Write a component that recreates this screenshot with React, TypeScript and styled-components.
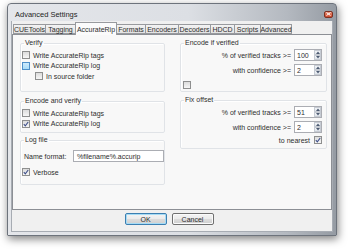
import React from "react";
import styled, { createGlobalStyle } from "styled-components";

const tabs = [
  { label: "CUETools", width: 33 },
  { label: "Tagging", width: 31 },
  { label: "AccurateRip", width: 42, active: true },
  { label: "Formats", width: 30 },
  { label: "Encoders", width: 34 },
  { label: "Decoders", width: 33 },
  { label: "HDCD", width: 25 },
  { label: "Scripts", width: 27 },
  { label: "Advanced", width: 32 },
];

const Check: React.FC<{ checked?: boolean; hot?: boolean }> = ({ checked, hot }) => (
  <CheckBox $hot={hot}>
    {checked && (
      <svg width="6" height="6" viewBox="0 0 6 6">
        <path d="M0.8 3.2 L2.3 4.8 L5.2 1" fill="none" stroke="#3d4f8a" strokeWidth="1.1" />
      </svg>
    )}
  </CheckBox>
);

const Spin: React.FC<{ value: string }> = ({ value }) => (
  <SpinBox>
    <SpinText>{value}</SpinText>
    <SpinArrows>
      <SpinButton>
        <svg width="4" height="3" viewBox="0 0 4 3">
          <path d="M0 3 L2 0.5 L4 3 Z" fill="#4d5b72" />
        </svg>
      </SpinButton>
      <SpinButton>
        <svg width="4" height="3" viewBox="0 0 4 3">
          <path d="M0 0 L2 2.5 L4 0 Z" fill="#4d5b72" />
        </svg>
      </SpinButton>
    </SpinArrows>
  </SpinBox>
);

export default function App() {
  return (
    <Page>
      <GlobalStyle />
      <Window>
        <TitleBar>
          <Title>Advanced Settings</Title>
          <CloseButton>
            <svg width="5" height="4" viewBox="0 0 5 4">
              <path d="M0.5 0.5 L4.5 3.5 M4.5 0.5 L0.5 3.5" stroke="#fff" strokeWidth="1" />
            </svg>
          </CloseButton>
        </TitleBar>
        <Client>
          <TabStrip>
            {tabs.map((t) => (
              <Tab key={t.label} $active={t.active} style={{ width: t.width }}>
                {t.label}
              </Tab>
            ))}
          </TabStrip>
          <Panel>
            <Column>
              <Group $height={53}>
                <Legend>Verify</Legend>
                <Rows>
                  <CheckRow>
                    <Check />
                    Write AccurateRip tags
                  </CheckRow>
                  <CheckRow>
                    <Check hot />
                    Write AccurateRip log
                  </CheckRow>
                  <CheckRow $indent>
                    <Check />
                    In source folder
                  </CheckRow>
                </Rows>
              </Group>
              <Group $height={36} $gap={5}>
                <Legend>Encode and verify</Legend>
                <Rows>
                  <CheckRow>
                    <Check />
                    Write AccurateRip tags
                  </CheckRow>
                  <CheckRow>
                    <Check checked />
                    Write AccurateRip log
                  </CheckRow>
                </Rows>
              </Group>
              <Group $height={49} $gap={3}>
                <Legend>Log file</Legend>
                <FormatRow>
                  <FormatLabel>Name format:</FormatLabel>
                  <TextInput>%filename%.accurip</TextInput>
                </FormatRow>
                <VerboseRow>
                  <Check checked />
                  Verbose
                </VerboseRow>
              </Group>
            </Column>
            <Column>
              <Group $height={53}>
                <Legend>Encode if verified</Legend>
                <SpinRows>
                  <SpinRow>
                    % of verified tracks &gt;=
                    <Spin value="100" />
                  </SpinRow>
                  <SpinRow>
                    with confidence &gt;=
                    <Spin value="2" />
                  </SpinRow>
                  <LoneCheck>
                    <Check />
                  </LoneCheck>
                </SpinRows>
              </Group>
              <Group $height={53} $gap={4}>
                <Legend>Fix offset</Legend>
                <SpinRows>
                  <SpinRow>
                    % of verified tracks &gt;=
                    <Spin value="51" />
                  </SpinRow>
                  <SpinRow>
                    with confidence &gt;=
                    <Spin value="2" />
                  </SpinRow>
                  <NearestRow>
                    to nearest
                    <Check checked />
                  </NearestRow>
                </SpinRows>
              </Group>
            </Column>
          </Panel>
          <Footer>
            <Button $default>OK</Button>
            <Button>Cancel</Button>
          </Footer>
        </Client>
      </Window>
    </Page>
  );
}

const GlobalStyle = createGlobalStyle`
  html, body {
    margin: 0;
    padding: 0;
    background: #ffffff;
  }
  body {
    font-family: "Liberation Sans", Tahoma, sans-serif;
    font-size: 7px;
    color: #2e2e2e;
  }
`;

const Page = styled.div`
  width: 350px;
  height: 250px;
  box-sizing: border-box;
  padding: 3px 0 0 7px;
`;

const Window = styled.div`
  width: 330px;
  height: 233px;
  box-sizing: border-box;
  display: flex;
  flex-direction: column;
  padding: 0 3px 3px 3px;
  border: 1px solid #6d737c;
  border-radius: 4px 4px 1px 1px;
  background: linear-gradient(to right, #e4e6ea 0%, #dcdfe4 55%, #b4b9c0 85%, #959ba3 100%);
  box-shadow: 1px 3px 9px rgba(0, 0, 0, 0.5);
`;

const TitleBar = styled.div`
  height: 17px;
  box-sizing: border-box;
  display: flex;
  align-items: center;
  justify-content: space-between;
  padding: 3px 0 0 4px;
`;

const Title = styled.span`
  font-size: 7.5px;
  color: #1e1e1e;
`;

const CloseButton = styled.div`
  width: 9px;
  height: 7px;
  box-sizing: border-box;
  display: flex;
  align-items: center;
  justify-content: center;
  border: 1px solid #7c3022;
  border-radius: 2px;
  background: linear-gradient(#ec8d72, #cc4a2e);
`;

const Client = styled.div`
  flex: 1;
  display: flex;
  flex-direction: column;
  background: #f0f0f0;
  border: 1px solid #a7acb3;
  border-top: none;
`;

const TabStrip = styled.div`
  height: 13px;
  display: flex;
  align-items: flex-end;
  padding-left: 1px;
`;

const Tab = styled.div<{ $active?: boolean }>`
  box-sizing: border-box;
  height: ${(p) => (p.$active ? 13 : 10)}px;
  margin-right: -1px;
  margin-bottom: ${(p) => (p.$active ? -1 : 0)}px;
  display: flex;
  align-items: center;
  justify-content: center;
  border: 1px solid #989a9e;
  border-bottom: ${(p) => (p.$active ? "none" : "1px solid #989a9e")};
  background: ${(p) => (p.$active ? "#fbfbfb" : "linear-gradient(#f3f3f3, #e2e2e2)")};
  position: relative;
  z-index: ${(p) => (p.$active ? 2 : 1)};
  white-space: nowrap;
`;

const Panel = styled.div`
  height: 176px;
  box-sizing: border-box;
  display: grid;
  grid-template-columns: 145px 147px;
  column-gap: 15px;
  align-content: start;
  padding: 4px 0 0 7px;
  border: 1px solid #8c8f95;
  background: #f8f8f8;
`;

const Column = styled.div`
  display: flex;
  flex-direction: column;
`;

const Group = styled.fieldset<{ $height: number; $gap?: number }>`
  box-sizing: border-box;
  height: ${(p) => p.$height}px;
  margin: ${(p) => p.$gap ?? 0}px 0 0 0;
  padding: 0 0 0 1px;
  min-width: 0;
  border: 1px solid #e0e3e7;
  border-radius: 2px;
  box-shadow: inset 1px 1px 0 #ffffff;
`;

const Legend = styled.legend`
  padding: 0 1px;
  margin-left: 2px;
  line-height: 8px;
  font-size: 7px;
`;

const Rows = styled.div`
  display: flex;
  flex-direction: column;
  padding-top: 3px;
`;

const CheckRow = styled.div<{ $indent?: boolean }>`
  height: 10.5px;
  display: flex;
  align-items: center;
  gap: 3px;
  padding-left: ${(p) => (p.$indent ? 13 : 0)}px;
  white-space: nowrap;
`;

const CheckBox = styled.span<{ $hot?: boolean }>`
  width: 8px;
  height: 8px;
  box-sizing: border-box;
  flex: none;
  display: flex;
  align-items: center;
  justify-content: center;
  border: 1px solid ${(p) => (p.$hot ? "#4f8fc9" : "#8e8f8f")};
  background: ${(p) => (p.$hot ? "linear-gradient(#cdeafc, #a9dcf8)" : "linear-gradient(#dcdcdc, #f6f6f6)")};
`;

const FormatRow = styled.div`
  display: flex;
  align-items: center;
  padding: 6px 0 0 2px;
  height: 12px;
`;

const FormatLabel = styled.span`
  width: 49px;
  white-space: nowrap;
`;

const TextInput = styled.div`
  width: 91px;
  height: 12px;
  box-sizing: border-box;
  display: flex;
  align-items: center;
  padding-left: 3px;
  border: 1px solid #abadb3;
  background: #ffffff;
  white-space: nowrap;
`;

const VerboseRow = styled.div`
  height: 10.5px;
  display: flex;
  align-items: center;
  gap: 3px;
  margin-top: 5px;
`;

const SpinRows = styled.div`
  display: flex;
  flex-direction: column;
  gap: 3px;
  padding: 2px 4px 0 1px;
`;

const SpinRow = styled.div`
  display: flex;
  align-items: center;
  justify-content: flex-end;
  gap: 3px;
  white-space: nowrap;
`;

const SpinBox = styled.div`
  width: 28px;
  height: 12px;
  box-sizing: border-box;
  display: flex;
  border: 1px solid #abadb3;
  background: #ffffff;
`;

const SpinText = styled.span`
  flex: 1;
  display: flex;
  align-items: center;
  padding-left: 2px;
`;

const SpinArrows = styled.div`
  width: 7px;
  display: flex;
  flex-direction: column;
`;

const SpinButton = styled.div`
  flex: 1;
  display: flex;
  align-items: center;
  justify-content: center;
  border: 1px solid #c6cbd3;
  background: linear-gradient(#f3f5f8, #dfe4ea);
`;

const LoneCheck = styled.div`
  display: flex;
  margin-top: 2px;
`;

const NearestRow = styled.div`
  display: flex;
  align-items: center;
  justify-content: flex-end;
  gap: 4px;
  height: 8px;
`;

const Footer = styled.div`
  flex: 1;
  display: flex;
  justify-content: center;
  gap: 5px;
  padding: 3px 6px 0 0;
`;

const Button = styled.div<{ $default?: boolean }>`
  width: 42px;
  height: 12px;
  box-sizing: border-box;
  display: flex;
  align-items: center;
  justify-content: center;
  border: 1px solid ${(p) => (p.$default ? "#3c7fb1" : "#707070")};
  border-radius: 2px;
  background: linear-gradient(#f4f4f4 0%, #ebebeb 50%, #dddddd 51%, #cfcfcf 100%);
  box-shadow: ${(p) => (p.$default ? "inset 0 0 0 1px #a6dcf6" : "inset 0 0 0 1px #fbfbfb")};
`;
